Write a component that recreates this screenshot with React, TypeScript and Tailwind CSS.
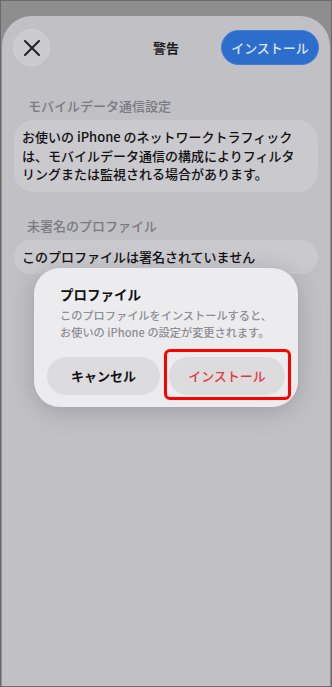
import React from "react";

const font = { fontFamily: '"Noto Sans CJK JP", "Noto Sans", sans-serif' };

export default function App() {
  return (
    <div
      className="relative w-[332px] h-[687px] overflow-hidden border border-[#6a6a6a] bg-[#8e8e8e] pt-[15px] px-px"
      style={font}
    >
      <div className="h-full rounded-t-[30px] bg-[#c1c0c5]">
        {/* header */}
        <div className="grid grid-cols-[1fr_auto_1fr] items-center pl-[11px] pr-[11px] pt-[13px]">
          <div className="flex">
            <div className="flex h-[37px] w-[37px] items-center justify-center rounded-full border border-[#d3d2d6] bg-[#cbcacf]">
              <svg width="16" height="16" viewBox="0 0 16 16">
                <path d="M1 1 L15 15 M15 1 L1 15" stroke="#1d1d1f" strokeWidth="1.9" strokeLinecap="round" />
              </svg>
            </div>
          </div>
          <div className="text-[13px] font-bold leading-[18px] text-[#1c1c1e]">警告</div>
          <div className="flex justify-end">
            <div className="flex h-[35px] w-[98px] items-center justify-center rounded-full border border-[#3f7fd9] bg-[#2d6ecd] text-[13px] font-medium text-[#dbe6fa]">
              インストール
            </div>
          </div>
        </div>

        {/* section 1 */}
        <div className="mt-[31px] pl-[26px] text-[13px] font-medium leading-[18px] text-[#7a7a80]">
          モバイルデータ通信設定
        </div>
        <div className="mx-[12px] mt-[5px] rounded-[20px] bg-[#cac9ce] px-[8px] py-[8px] text-[13px] font-medium leading-[18.5px] text-[#111]">
          お使いの iPhone のネットワークトラフィック
          <br />
          は、モバイルデータ通信の構成によりフィルタ
          <br />
          リングまたは監視される場合があります。
        </div>

        {/* section 2 */}
        <div className="mt-[25px] pl-[25px] text-[13px] font-medium leading-[18px] text-[#7a7a80]">
          未署名のプロファイル
        </div>
        <div className="mx-[12px] mt-[5px] rounded-[20px] bg-[#cac9ce] px-[8px] py-[8px] text-[13px] font-medium leading-[18.5px] text-[#111]">
          このプロファイルは署名されていません
        </div>
      </div>

      {/* dialog */}
      <div className="absolute left-[33px] top-[267px] w-[264px] rounded-[26px] bg-[#ececee] px-[13px] pb-[12px] pt-[17px] shadow-[0_4px_24px_rgba(0,0,0,0.18)]">
        <div className="pl-[13px] text-[13.5px] font-bold leading-[18px] text-[#111]">プロファイル</div>
        <div className="mt-[4px] pl-[13px] text-[11.2px] font-medium leading-[17px] text-[#8e8e93]">
          このプロファイルをインストールすると、
          <br />
          お使いの iPhone の設定が変更されます。
        </div>
        <div className="mt-[16px] flex gap-[9px]">
          <div className="flex h-[38px] w-[113px] items-center justify-center rounded-full bg-[#dcdcdf] text-[13px] font-bold text-[#111]">
            キャンセル
          </div>
          <div className="flex h-[38px] flex-1 items-center justify-center rounded-full bg-[#dcdcdf] text-[13px] font-medium text-[#e5383b]">
            インストール
          </div>
        </div>
      </div>

      {/* highlight */}
      <div className="absolute left-[163px] top-[348px] h-[51px] w-[127px] rounded-[6px] border-[3px] border-[#ff0000]" />
    </div>
  );
}
